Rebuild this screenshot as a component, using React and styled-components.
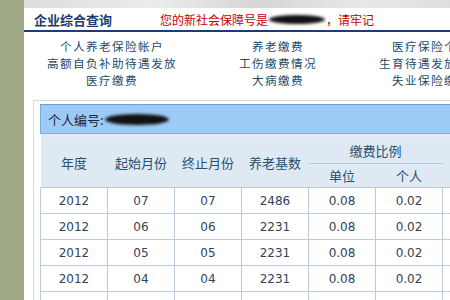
import React from 'react'
import styled, { createGlobalStyle } from 'styled-components';

const GlobalStyle = createGlobalStyle`
  body {
    margin: 0;
    width: 450px;
    height: 300px;
    overflow: hidden;
    background: #fff;
    font-family: "Noto Sans CJK SC", "DejaVu Sans", sans-serif;
  }
`;

const Page = styled.div`
  display: flex;
  align-items: flex-start;
  width: 450px;
  height: 300px;
  overflow: hidden;
`;

const Sidebar = styled.div`
  flex: 0 0 24px;
  height: 300px;
  background: #a0a987;
`;

const Main = styled.div`
  flex: 1;
  min-width: 0;
`;

const TopBand = styled.div`
  height: 8px;
  background: linear-gradient(90deg, #dcdcdc 0%, #ececec 30%, #d6d6d6 55%, #e8e8e8 80%, #dedede 100%);
`;

const Header = styled.div`
  height: 22px;
  display: flex;
  align-items: center;
  padding-left: 10px;
  white-space: nowrap;
`;

const Title = styled.span`
  font-size: 13px;
  font-weight: 700;
  color: #1b3c73;
  width: 126px;
`;

const Notice = styled.span`
  font-size: 12px;
  color: #c40000;
  display: flex;
  align-items: center;
`;

const Blot = styled.span`
  display: inline-block;
  width: ${({ $w }) => $w}px;
  height: ${({ $h }) => $h}px;
  background: #111;
  border-radius: 50%;
  filter: blur(1.4px);
  margin: 0 ${({ $gap }) => $gap}px;
`;

const Rule = styled.div`
  height: 2px;
  background: #1d3b78;
`;

const Links = styled.div`
  display: grid;
  grid-template-columns: repeat(3, 166px);
  padding: 6px 0 0 5px;
  height: 62px;
`;

const LinkCol = styled.div`
  display: flex;
  flex-direction: column;
  align-items: center;
`;

const LinkItem = styled.a`
  font-size: 11.6px;
  letter-spacing: 1.4px;
  line-height: 17px;
  color: #1d4b6b;
  text-decoration: none;
  white-space: nowrap;
`;

const Panel = styled.div`
  margin: 0 0 0 9px;
  border-top: 1px solid #d8d8d8;
  border-left: 1px solid #d8d8d8;
  padding: 3px 0 0 6px;
`;

const IdBar = styled.div`
  height: 28px;
  display: flex;
  align-items: center;
  padding-left: 7px;
  background: #9dcaf6;
  border-top: 1px solid #6f9fcc;
  border-bottom: 1px solid #7fb1d6;
  border-left: 1px solid #7fa9cf;
  font-size: 13px;
  color: #1c2430;
`;

const Table = styled.table`
  border-collapse: collapse;
  table-layout: fixed;
  width: 469px;
  background: #fff;
`;

const HeadRow = styled.tr`
  background: #dfe9f3;
`;

const Th = styled.th`
  font-weight: 400;
  font-size: 13px;
  color: #27506e;
  text-align: center;
  padding: 0;
  height: ${({ $h }) => $h}px;
  border-bottom: ${({ $line }) => ($line ? '1px solid #b6c9dd' : 'none')};
  border-top: ${({ $top }) => ($top ? '3px solid #e6e9ed' : 'none')};
`;

const Td = styled.td`
  font-family: "DejaVu Sans", sans-serif;
  font-size: 12px;
  color: #33415a;
  text-align: center;
  height: 25px;
  padding: 0;
  border: 1px solid #bccbdb;
`;

const rows = [
  ['2012', '07', '07', '2486', '0.08', '0.02', ''],
  ['2012', '06', '06', '2231', '0.08', '0.02', ''],
  ['2012', '05', '05', '2231', '0.08', '0.02', ''],
  ['2012', '04', '04', '2231', '0.08', '0.02', ''],
  ['2012', '03', '03', '2231', '0.08', '0.02', ''],
];

const linkCols = [
  ['个人养老保险帐户', '高额自负补助待遇发放', '医疗缴费'],
  ['养老缴费', '工伤缴费情况', '大病缴费'],
  ['医疗保险个人帐户', '生育待遇发放情况查询', '失业保险缴费情况'],
];

const App = () => {
  return (
    <>
      <GlobalStyle />
      <Page>
        <Sidebar />
        <Main>
          <TopBand />
          <Header>
            <Title>企业综合查询</Title>
            <Notice>
              您的新社会保障号是<Blot $w={56} $h={9} $gap={1} />，请牢记
            </Notice>
          </Header>
          <Rule />
          <Links>
            {linkCols.map((col, i) => (
              <LinkCol key={i}>
                {col.map((t) => (
                  <LinkItem key={t} href="#">{t}</LinkItem>
                ))}
              </LinkCol>
            ))}
          </Links>
          <Panel>
            <IdBar>
              个人编号:<Blot $w={64} $h={11} $gap={1} />
            </IdBar>
            <Table>
              <colgroup>
                {[0, 1, 2, 3, 4, 5, 6].map((i) => (
                  <col key={i} style={{ width: 67 }} />
                ))}
              </colgroup>
              <thead>
                <HeadRow>
                  <Th rowSpan={2} $top>年度</Th>
                  <Th rowSpan={2} $top>起始月份</Th>
                  <Th rowSpan={2} $top>终止月份</Th>
                  <Th rowSpan={2} $top>养老基数</Th>
                  <Th colSpan={2} $h={26} $line $top>缴费比例</Th>
                  <Th rowSpan={2} $top></Th>
                </HeadRow>
                <HeadRow>
                  <Th $h={23}>单位</Th>
                  <Th $h={23}>个人</Th>
                </HeadRow>
              </thead>
              <tbody>
                {rows.map((r, i) => (
                  <tr key={i}>
                    {r.map((c, j) => (
                      <Td key={j}>{c}</Td>
                    ))}
                  </tr>
                ))}
              </tbody>
            </Table>
          </Panel>
        </Main>
      </Page>
    </>
  );
};

export default App;
